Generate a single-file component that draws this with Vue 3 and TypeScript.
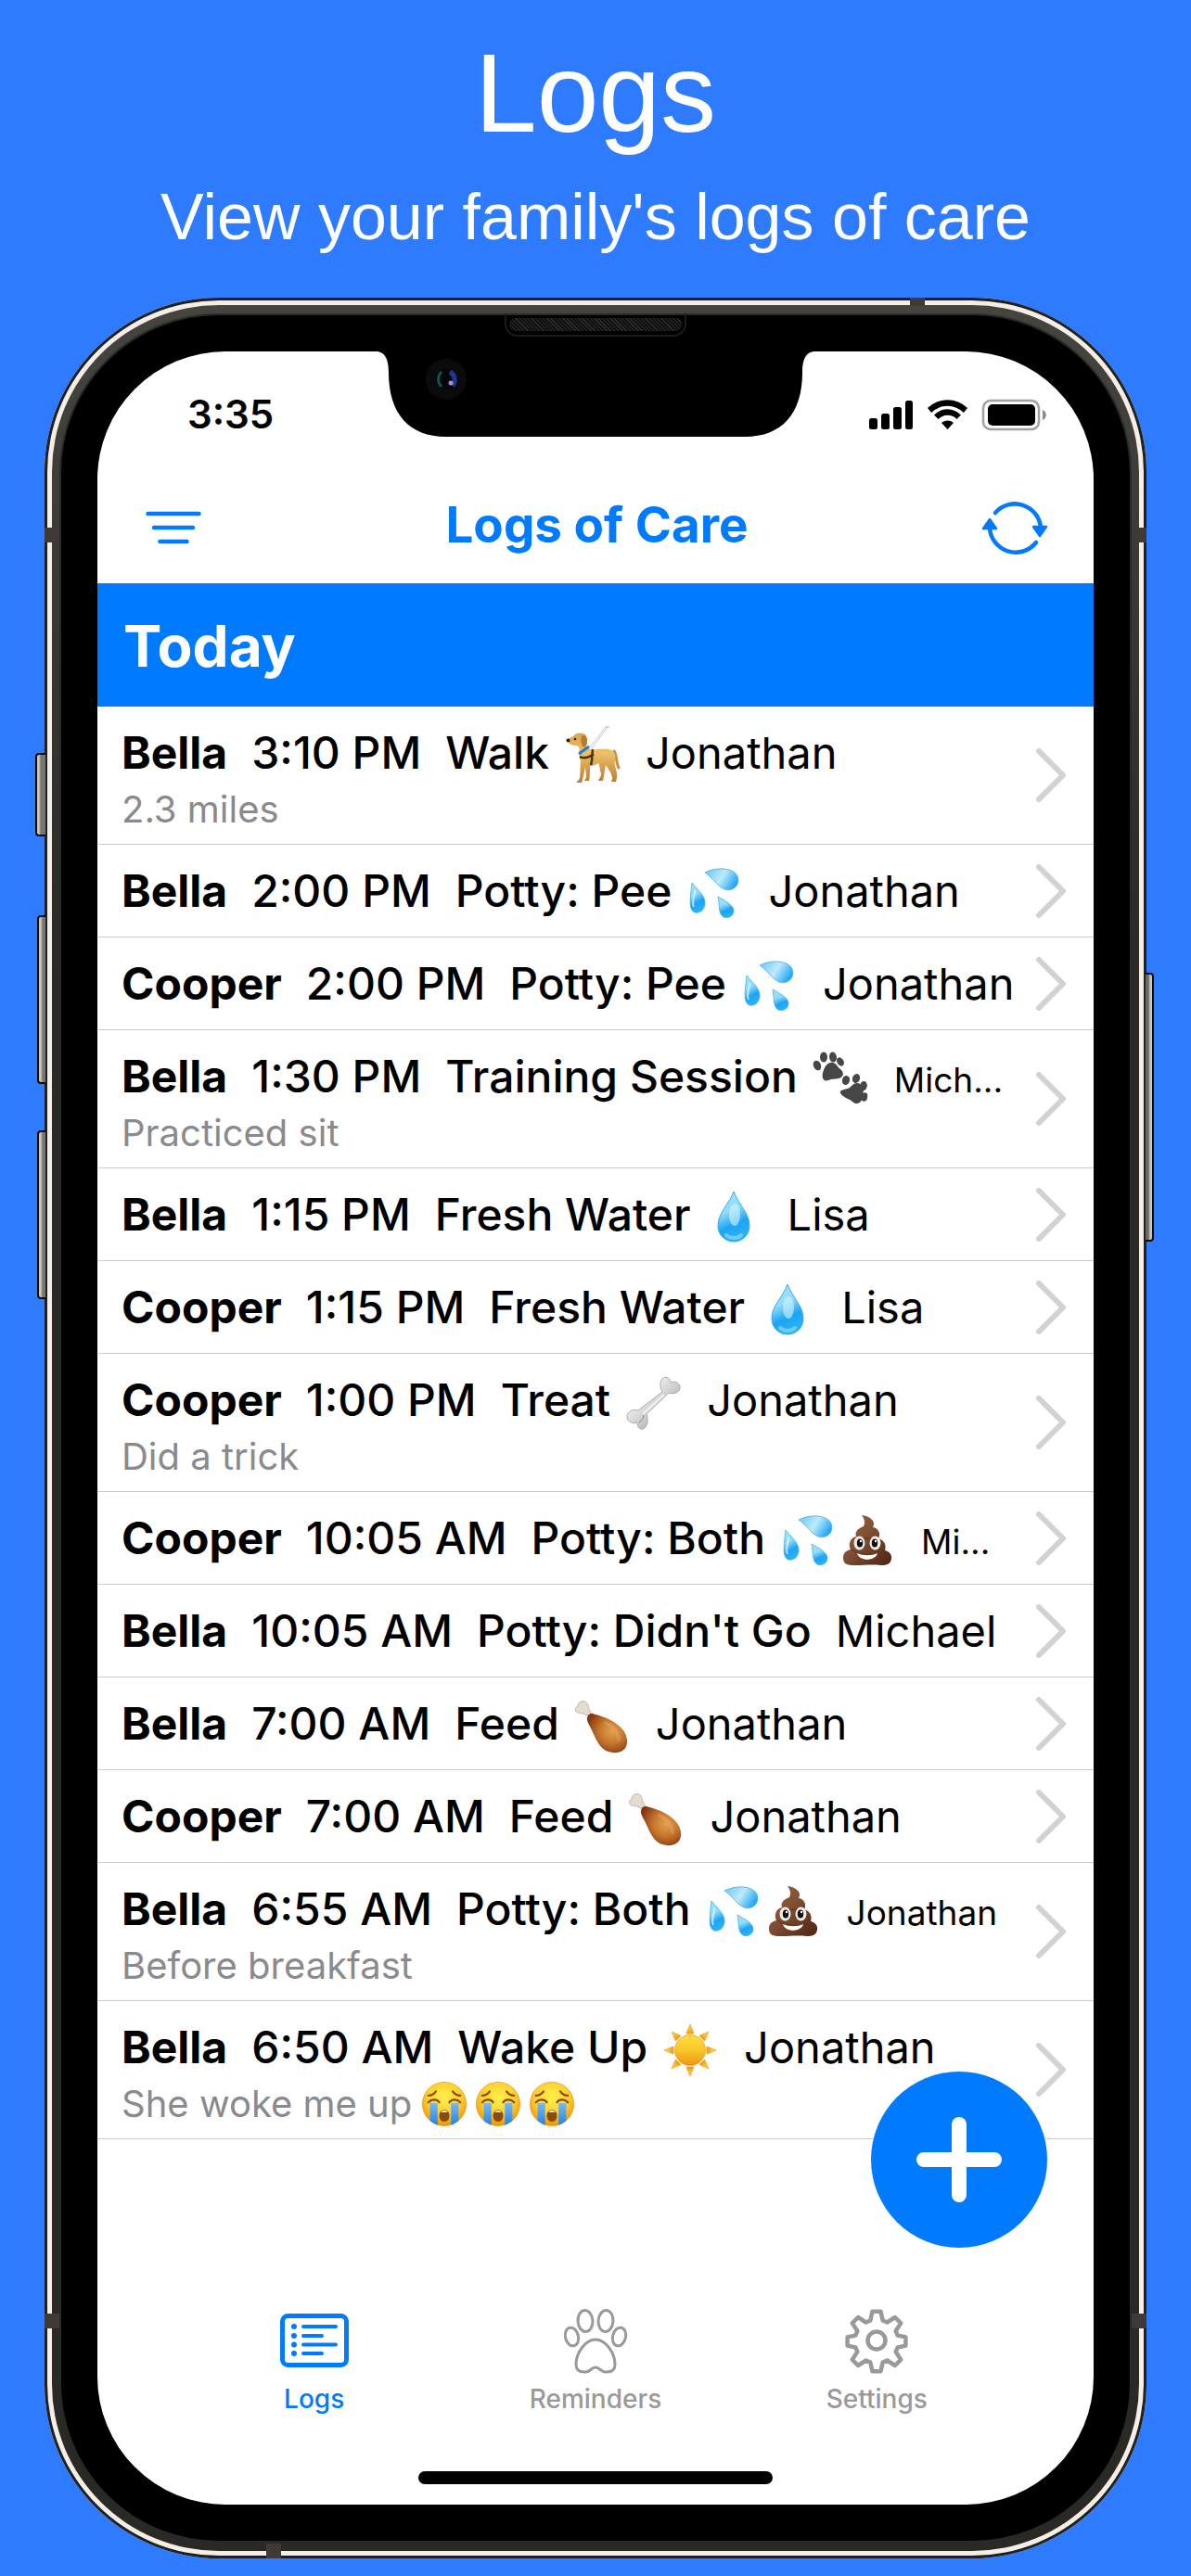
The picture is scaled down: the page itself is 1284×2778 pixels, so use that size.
<script setup lang="ts">
type Emoji = 'dog' | 'drops' | 'paws' | 'droplet' | 'bone' | 'poop' | 'leg' | 'sun' | 'cry'

interface LogEntry {
  id: number
  pet: string
  time: string
  action: string
  emojis: Emoji[]
  person: string
  small?: boolean
  note?: string
  noteEmojis?: Emoji[]
}

const logs: LogEntry[] = [
  { id: 1, pet: 'Bella', time: '3:10 PM', action: 'Walk', emojis: ['dog'], person: 'Jonathan', note: '2.3 miles' },
  { id: 2, pet: 'Bella', time: '2:00 PM', action: 'Potty: Pee', emojis: ['drops'], person: 'Jonathan' },
  { id: 3, pet: 'Cooper', time: '2:00 PM', action: 'Potty: Pee', emojis: ['drops'], person: 'Jonathan' },
  { id: 4, pet: 'Bella', time: '1:30 PM', action: 'Training Session', emojis: ['paws'], person: 'Mich...', small: true, note: 'Practiced sit' },
  { id: 5, pet: 'Bella', time: '1:15 PM', action: 'Fresh Water', emojis: ['droplet'], person: 'Lisa' },
  { id: 6, pet: 'Cooper', time: '1:15 PM', action: 'Fresh Water', emojis: ['droplet'], person: 'Lisa' },
  { id: 7, pet: 'Cooper', time: '1:00 PM', action: 'Treat', emojis: ['bone'], person: 'Jonathan', note: 'Did a trick' },
  { id: 8, pet: 'Cooper', time: '10:05 AM', action: 'Potty: Both', emojis: ['drops', 'poop'], person: 'Mi...', small: true },
  { id: 9, pet: 'Bella', time: '10:05 AM', action: "Potty: Didn't Go", emojis: [], person: 'Michael' },
  { id: 10, pet: 'Bella', time: '7:00 AM', action: 'Feed', emojis: ['leg'], person: 'Jonathan' },
  { id: 11, pet: 'Cooper', time: '7:00 AM', action: 'Feed', emojis: ['leg'], person: 'Jonathan' },
  { id: 12, pet: 'Bella', time: '6:55 AM', action: 'Potty: Both', emojis: ['drops', 'poop'], person: 'Jonathan', small: true, note: 'Before breakfast' },
  { id: 13, pet: 'Bella', time: '6:50 AM', action: 'Wake Up', emojis: ['sun'], person: 'Jonathan', note: 'She woke me up', noteEmojis: ['cry', 'cry', 'cry'] },
]

const rays = [0, 45, 90, 135, 180, 225, 270, 315]
</script>

<template>
  <div class="page">
    <svg class="sprite" aria-hidden="true">
      <defs>
        <linearGradient id="gWater" x1="0" y1="0" x2="0.3" y2="1">
          <stop offset="0" stop-color="#a9e2fb" /><stop offset="0.45" stop-color="#8fdcfb" /><stop offset="0.75" stop-color="#1ca4f4" /><stop offset="1" stop-color="#2bb0f5" />
        </linearGradient>
        <linearGradient id="gWaterSide" x1="0" y1="0.2" x2="1" y2="0.6">
          <stop offset="0" stop-color="#6fc9f5" /><stop offset="0.5" stop-color="#bdebfd" /><stop offset="1" stop-color="#1ca2f3" />
        </linearGradient>
        <linearGradient id="gPoop" x1="0" y1="0" x2="1" y2="1">
          <stop offset="0" stop-color="#9a6b4c" /><stop offset="0.5" stop-color="#7b4a2f" /><stop offset="1" stop-color="#4e2412" />
        </linearGradient>
        <radialGradient id="gLeg" cx="0.62" cy="0.45" r="0.65">
          <stop offset="0" stop-color="#e2a050" /><stop offset="0.5" stop-color="#c4742c" /><stop offset="1" stop-color="#84340f" />
        </radialGradient>
        <linearGradient id="gBone" x1="0" y1="0" x2="1" y2="1">
          <stop offset="0.3" stop-color="#f0f0f0" /><stop offset="0.6" stop-color="#c6c6c6" /><stop offset="1" stop-color="#808080" />
        </linearGradient>
        <linearGradient id="gSun" x1="0" y1="0" x2="0" y2="1">
          <stop offset="0" stop-color="#fcdf3c" /><stop offset="0.5" stop-color="#f8c62c" /><stop offset="1" stop-color="#ee9413" />
        </linearGradient>
        <linearGradient id="gDog" x1="0" y1="0" x2="0" y2="1">
          <stop offset="0" stop-color="#dca448" /><stop offset="0.4" stop-color="#ecc069" /><stop offset="1" stop-color="#b87a2a" />
        </linearGradient>
        <radialGradient id="gFace" cx="0.5" cy="0.35" r="0.65">
          <stop offset="0" stop-color="#fff04e" /><stop offset="0.6" stop-color="#fdcf2c" /><stop offset="1" stop-color="#ef9009" />
        </radialGradient>
        <linearGradient id="gTear" x1="0" y1="0" x2="0" y2="1">
          <stop offset="0" stop-color="#77b9f3" /><stop offset="1" stop-color="#2383e6" />
        </linearGradient>
      </defs>

      <symbol id="dog" viewBox="0 0 64 64">
        <path d="M49 1 32 24M46 2 30 23" fill="none" stroke="#c9c9c9" stroke-width="1" />
        <path d="M46 1 51 1" stroke="#c9c9c9" stroke-width="1.5" />
        <path d="M56 27c3 4 2 12 5 18" fill="none" stroke="#c98f3b" stroke-width="3" stroke-linecap="round" />
        <path d="M6 16c0-3 4-4 6-5 2-4 12-5 14 0 2 4-2 8 1 12 4 4 8 2 14 2 8-1 15 0 16 6 1 5-1 8 0 12 2 6 3 11 1 17h-5c0-2 2-2 1-5-1-5-4-8-7-13-1 6-2 12-3 17h-5c1-3 3-4 3-8-2-5-1-8-3-11-3 2-6 3-9 3 0 5 0 13-1 16h-5c1-2 2-2 2-5l-1-10c-1 6-3 14-4 18h-6c1-3 3-3 4-6 1-6 0-12 1-18-3-6 0-11-2-15-1-2-3-2-5-2-3-1-6-1-7-5z" fill="url(#gDog)" />
        <path d="M21 11c3-3 7 1 6 6 0 4-3 7-5 5-2-3-2-7-1-11z" fill="#b87a2d" />
        <circle cx="14" cy="14" r="1.3" fill="#2b1b08" /><circle cx="6.5" cy="15.5" r="2" fill="#2b1b08" />
        <path d="m18 30 11-8" stroke="#2a7bd0" stroke-width="3" />
        <path d="M19 33c5 3 11 0 15-3M33 25c-1 7 0 11-2 17" fill="none" stroke="#4b3310" stroke-width="2.5" />
      </symbol>

      <symbol id="drops" viewBox="0 0 64 64">
        <path d="M22 9c10-5 24-6 32 0 6 5 5 15-3 18-12 4-17-10-29-18z" fill="url(#gWaterSide)" stroke="#3fb0ee" stroke-width="0.8" />
        <path d="M8 20c6 8 15 14 14 23-1 7-6 10-11 9C3 49 7 32 8 20z" fill="url(#gWater)" stroke="#3fb0ee" stroke-width="0.8" />
        <path d="M36 35c7 4 17 9 17 15 0 6-6 9-11 7-6-4-4-13-6-22z" fill="url(#gWater)" stroke="#3fb0ee" stroke-width="0.8" />
        <path d="M11 28c1 5-4 11-1 18" fill="none" stroke="#e8fbff" stroke-width="2" opacity="0.7" />
      </symbol>

      <symbol id="paws" viewBox="0 0 64 64">
        <g fill="#464646">
          <path d="M14 22c2-5 5-9 10-8 4 1 4 4 8 7 5 4 3 9-2 10-4 1-7 0-11 2-6 2-8-4-5-11z" />
          <ellipse cx="7" cy="17" rx="4" ry="5.5" transform="rotate(-24 7 17)" />
          <ellipse cx="14" cy="8" rx="4" ry="5.5" />
          <ellipse cx="24" cy="8" rx="4" ry="5.5" transform="rotate(-8 24 8)" />
          <ellipse cx="32" cy="13" rx="3.5" ry="5" transform="rotate(-30 32 13)" />
          <path d="M33 44c4-2 8-1 11-5 4-4 9-4 12 1 2 4 0 6 0 11-1 7-7 9-11 5-3-3-7-3-10-6-3-2-4-5-2-6z" />
          <ellipse cx="38" cy="33" rx="4" ry="5" transform="rotate(15 38 33)" />
          <ellipse cx="49" cy="31" rx="4" ry="5" transform="rotate(22 49 31)" />
          <ellipse cx="57" cy="39" rx="3.8" ry="5" transform="rotate(8 57 39)" />
          <ellipse cx="58" cy="51" rx="3.2" ry="4.8" transform="rotate(10 58 51)" />
        </g>
      </symbol>

      <symbol id="droplet" viewBox="0 0 64 64">
        <path d="M32 4c5 14 17 23 17 37 0 10-8 17-17 17s-17-7-17-17C15 27 27 18 32 4z" fill="url(#gWater)" stroke="#35aaf0" stroke-width="1" />
        <ellipse cx="33" cy="29" rx="6" ry="12" fill="#d8f5ff" opacity="0.6" />
        <path d="M24 51c4 4 12 4 16 0" stroke="#7bd4fb" stroke-width="4" fill="none" stroke-linecap="round" opacity="0.8" />
      </symbol>

      <symbol id="bone" viewBox="0 0 64 64">
        <path d="M42 20c-3-5-3-12 1-15 4-2 8 1 8 5 4-2 10 0 10 5 0 6-7 8-12 6L25 44c2 5 2 14-4 16-4 1-6-3-6-7-5 2-11-1-11-6 0-6 7-9 12-7z" fill="url(#gBone)" stroke="#9c9c9c" stroke-width="0.8" />
        <path d="M44 23 21 44" stroke="#fff" stroke-width="3" opacity="0.6" />
        <path d="M17 53c3-2 5-5 5-8" stroke="#808080" stroke-width="1" fill="none" />
      </symbol>

      <symbol id="poop" viewBox="0 0 64 64">
        <path d="M26 4c9 1 16 7 12 13 6 1 9 7 6 12 6 2 9 7 7 13 5 1 8 5 7 9-1 6-5 7-11 7-10-1-18 0-29 0-7 0-12-1-12-8 0-5 3-8 8-9-3-6 0-13 6-14-2-6 3-9 8-11 2-4 1-8-2-12z" fill="url(#gPoop)" />
        <path d="M15 41c9 7 29 7 37 1M21 27c8 3 17 3 23 0" stroke="#5c3019" stroke-width="1.5" fill="none" opacity="0.6" />
        <ellipse cx="23.5" cy="34" rx="6" ry="7.5" fill="#f3eeea" /><ellipse cx="40.5" cy="34" rx="6" ry="7.5" fill="#f3eeea" />
        <ellipse cx="24" cy="34" rx="3.2" ry="4.5" fill="#111" /><ellipse cx="40" cy="34" rx="3.2" ry="4.5" fill="#111" />
        <circle cx="25" cy="32" r="1.2" fill="#fff" /><circle cx="41" cy="32" r="1.2" fill="#fff" />
        <path d="M21 45c7 3 15 3 22 0-2 9-20 9-22 0z" fill="#fff" />
      </symbol>

      <symbol id="leg" viewBox="0 0 64 64">
        <path d="M16 20 9 17c-5 2-8-5-3-7 0-6 9-8 11-1 1 4 2 8 6 10z" fill="#e4dcd0" stroke="#b5a896" stroke-width="0.8" />
        <path d="M17 20c2-3 5-2 8-1 14 3 36 14 34 31-1 9-11 12-20 9-12-4-15-19-21-29-2-4-3-7-1-10z" fill="url(#gLeg)" />
        <path d="M36 28c8 4 14 11 14 18" fill="none" stroke="#edb869" stroke-width="4" stroke-linecap="round" opacity="0.3" />
      </symbol>

      <symbol id="sun" viewBox="0 0 64 64">
        <path v-for="ray in rays" :key="ray" d="M28 14 32 4l4 10z" :transform="`rotate(${ray} 32 32)`" fill="url(#gSun)" stroke="#eda326" stroke-width="0.8" />
        <circle cx="32" cy="32" r="16.5" fill="url(#gSun)" stroke="#ef9f1b" stroke-width="0.8" />
      </symbol>

      <symbol id="cry" viewBox="0 0 64 64">
        <circle cx="32" cy="32" r="26" fill="url(#gFace)" stroke="#ea9410" stroke-width="0.8" />
        <path d="M13 22c4 0 7-2 9-5M51 22c-4 0-7-2-9-5M13 30c4-4 10-4 13 0M38 30c3-4 9-4 13 0" fill="none" stroke="#8a4a0d" stroke-width="2.5" stroke-linecap="round" />
        <path d="M15 31h9v26c-3-1-6-3-9-5zM40 31h9v21c-3 2-6 4-9 5z" fill="url(#gTear)" />
        <rect x="26" y="39" width="12" height="14" rx="6" fill="#8a4c0c" /><path d="M28 42c2-3 6-3 8 0z" fill="#fff" />
      </symbol>

      <symbol id="chevron" viewBox="0 0 32 58">
        <path d="M3 3 29 29 3 55" fill="none" stroke="#d1d1d6" stroke-width="6" stroke-linecap="round" stroke-linejoin="round" />
      </symbol>
    </svg>

    <header class="promo">
      <h1>Logs</h1>
      <p>View your family's logs of care</p>
    </header>

    <div class="phone">
      <i class="key mute"></i><i class="key up"></i><i class="key down"></i><i class="key power"></i>
      <i class="antenna top"></i><i class="antenna bottom"></i>
      <i class="antenna left-a"></i><i class="antenna left-b"></i>
      <i class="antenna right-a"></i><i class="antenna right-b"></i>
      <div class="band">
        <div class="bezel">
          <i class="speaker"></i>
          <main class="screen">
            <svg class="notch" viewBox="0 0 474 93" aria-hidden="true">
              <path d="M0 0C11 0 14 10 14 23 14 67 36 92 76 92H398c40 0 62-25 62-69C460 10 463 0 474 0z" />
              <circle cx="76" cy="30" r="22" fill="#0b0b0c" />
              <circle cx="76" cy="30" r="11" fill="#04060c" />
              <path d="M71 22a11 11 0 0 0 0 16" fill="none" stroke="#17514f" stroke-width="3" />
              <path d="M80 22a10 10 0 0 1 3 15" fill="none" stroke="#1f3790" stroke-width="5" />
              <circle cx="81" cy="34" r="2.5" fill="#b48bd0" />
            </svg>

            <div class="status">
              <span>3:35</span>
              <svg width="192" height="36" viewBox="0 0 192 36" aria-hidden="true">
                <rect x="1" y="22" width="9" height="12" rx="2.5" /><rect x="14" y="17" width="9" height="17" rx="2.5" />
                <rect x="27" y="10" width="9" height="24" rx="2.5" /><rect x="40" y="3" width="8" height="31" rx="2.5" />
                <path d="M64 11a31 31 0 0 1 43 0l-4 5a25 25 0 0 0-35 0zM71 18.500a20 20 0 0 1 29 0l-4.500 4.500a14 14 0 0 0-20 0zM79 27a10 10 0 0 1 13 0l-6.500 7z" />
                <rect x="124" y="3" width="60" height="31" rx="8" fill="none" stroke="#a0a0a0" stroke-width="2.5" />
                <rect x="129" y="7" width="51" height="23" rx="5" />
                <path d="M188 13c5 2 5 9 0 11z" fill="#8a8a8a" />
              </svg>
            </div>

            <nav class="navbar" aria-label="Page actions">
              <button type="button" aria-label="Filter">
                <svg width="60" height="36" viewBox="0 0 60 36"><path d="M2.500 3h55M9 18h42M15.500 33h29" fill="none" stroke="currentColor" stroke-width="4.5" stroke-linecap="round" /></svg>
              </button>
              <h2>Logs of Care</h2>
              <button type="button" aria-label="Refresh">
                <svg width="72" height="62" viewBox="0 0 72 62">
                  <path d="M15 15A28 28 0 0 1 64 31M59 47A28 28 0 0 1 9 31" fill="none" stroke="currentColor" stroke-width="4.5" stroke-linecap="round" />
                  <path d="m9 22 7 10H2zM63 40l-7-10h14z" fill="currentColor" stroke="currentColor" stroke-width="2.5" stroke-linejoin="round" />
                </svg>
              </button>
            </nav>

            <h3 class="day">Today</h3>

            <ul class="logs">
              <li v-for="log in logs" :key="log.id">
                <a href="#">
                  <div class="entry">
                    <div class="line">
                      <strong>{{ log.pet }}</strong>
                      <time>{{ log.time }}</time>
                      <span class="action">
                        <span class="label">{{ log.action }}</span>
                        <svg v-for="e in log.emojis" :key="e" class="emoji" viewBox="0 -3 64 64"><use :href="`#${e}`" width="64" height="64" /></svg>
                      </span>
                      <span class="person" :class="{ small: log.small }">{{ log.person }}</span>
                    </div>
                    <div v-if="log.note" class="note">
                      <span>{{ log.note }}</span>
                      <svg v-for="(e, i) in log.noteEmojis" :key="i" viewBox="0 0 64 64"><use :href="`#${e}`" width="64" height="64" /></svg>
                    </div>
                  </div>
                  <svg class="chevron" viewBox="0 0 32 58"><use href="#chevron" width="32" height="58" /></svg>
                </a>
              </li>
            </ul>

            <nav class="tabs" aria-label="Sections">
              <a href="#" class="active" aria-current="page">
                <svg viewBox="0 0 76 76">
                  <rect x="3.5" y="11.5" width="69" height="53" rx="6" fill="none" stroke="currentColor" stroke-width="5" />
                  <path d="M26 23h35M26 33h20M26 42.500h35M26 52h20" fill="none" stroke="currentColor" stroke-width="4" stroke-linecap="round" />
                  <g fill="currentColor"><circle cx="16" cy="23" r="3" /><circle cx="16" cy="33" r="3" /><circle cx="16" cy="42.5" r="3" /><circle cx="16" cy="52" r="3" /></g>
                </svg>
                Logs
              </a>
              <a href="#">
                <svg viewBox="0 0 76 76" fill="none" stroke="currentColor" stroke-width="3">
                  <ellipse cx="27" cy="17" rx="8" ry="11.5" transform="rotate(-4 27 17)" /><ellipse cx="49" cy="17" rx="8" ry="11.5" transform="rotate(4 49 17)" />
                  <ellipse cx="12.5" cy="34" rx="7" ry="10" transform="rotate(-14 12.5 34)" /><ellipse cx="63.5" cy="34" rx="7" ry="10" transform="rotate(14 63.5 34)" />
                  <path d="M38 37c10 0 21 13 21 27 0 5-3 8-9 8-6 1-7-5-12-5s-6 6-12 5c-6 0-9-3-9-8 0-14 11-27 21-27z" />
                </svg>
                Reminders
              </a>
              <a href="#">
                <svg viewBox="0 0 76 76" fill="none" stroke="currentColor" stroke-width="4.5" stroke-linejoin="round">
                  <path d="M33.500 6.800h9l2.200 9.700 4.700 2 8.500-5.500 6.300 6.300-5.500 8.500 2 4.700 8.700 1.900v9.200l-8.700 1.900-2 4.700 5.500 8.500-6.300 6.300-8.500-5.500-4.700 2-2.200 9.700h-9l-2.200-9.700-4.700-2-8.500 5.500-6.300-6.300 5.500-8.500-2-4.700-8.700-1.900v-9.200l8.700-1.900 2-4.700-5.500-8.500 6.300-6.300 8.500 5.500 4.700-2z" />
                  <circle cx="38" cy="38" r="9.5" />
                </svg>
                Settings
              </a>
            </nav>
            <div class="home"></div>

            <button type="button" class="fab" aria-label="Add log">
              <svg viewBox="0 0 92 92"><path d="M46 8v76M8 46h76" stroke="#fff" stroke-width="16" stroke-linecap="round" /></svg>
            </button>
          </main>
        </div>
      </div>
    </div>
  </div>
</template>

<style>
body {
  margin: 0;
  background: #2e7bff;
}
</style>

<style scoped>
* {
  box-sizing: border-box;
}

.page {
  display: flex;
  flex-direction: column;
  min-height: 100vh;
  background: #2e7bff;
  font-family: Inter, "Liberation Sans", sans-serif;
}

.sprite {
  position: absolute;
  width: 0;
  height: 0;
}

.promo {
  padding: 30px 0 44px;
  color: #fff;
  font-family: "Liberation Sans", Arial, sans-serif;
  text-align: center;
}

.promo h1 {
  margin: 0;
  font-size: 120px;
  font-weight: 400;
  line-height: 140px;
}

.promo p {
  margin: 21px 0 0;
  font-size: 70px;
  line-height: 86px;
}

.phone {
  position: relative;
  display: flex;
  flex: 1;
  margin: 0 48px 19px;
  padding: 8px;
  border-radius: 188px;
  background: #f5eee6;
  box-shadow: inset 0 0 0 3px #1f2021;
}

.band {
  display: flex;
  flex: 1;
  min-width: 0;
  padding: 9px 8px;
  border-radius: 180px;
  background: linear-gradient(#45443f, #2a2925 30%);
}

.bezel {
  position: relative;
  display: flex;
  flex: 1;
  min-width: 0;
  padding: 39px;
  border: 2px solid #29292a;
  border-radius: 172px;
  background: #000;
}

.key {
  position: absolute;
  left: -10px;
  width: 11px;
  border: 2px solid #0c0c0c;
  border-right: 0;
  border-radius: 4px 0 0 4px;
  background: linear-gradient(90deg, #cbc5bb 2px, #77766f 4px);
}

.mute { top: 491px; height: 90px; }
.up { top: 666px; left: -8px; width: 9px; height: 182px; }
.down { top: 898px; left: -8px; width: 9px; height: 182px; }
.power {
  top: 728px;
  right: -8px;
  left: auto;
  width: 9px;
  height: 290px;
  border: 2px solid #0c0c0c;
  border-left: 0;
  border-radius: 0 4px 4px 0;
  background: linear-gradient(270deg, #cbc5bb 2px, #6b6a60 4px);
}

.antenna {
  position: absolute;
  width: 16px;
  height: 16px;
  background: #3f3a38;
}

.top { top: 0; right: 239px; height: 9px; }
.bottom { bottom: 0; left: 239px; }
.left-a { top: 248px; left: 0; }
.left-b { bottom: 248px; left: 0; }
.right-a { top: 248px; right: 0; }
.right-b { bottom: 248px; right: 0; }

.speaker {
  position: absolute;
  top: -2px;
  left: 50%;
  width: 196px;
  height: 25px;
  margin-left: -98px;
  border: 2px solid #1c1c1c;
  border-top: 0;
  border-radius: 0 0 14px 14px;
}

.speaker::after {
  position: absolute;
  top: 5px;
  right: 3px;
  left: 3px;
  height: 14px;
  border-radius: 7px;
  background: repeating-linear-gradient(45deg, #111 0 2px, #2d2d2d 2px 3px);
  content: "";
}

.screen {
  position: relative;
  display: flex;
  flex: 1;
  flex-direction: column;
  min-width: 0;
  overflow: hidden;
  border-radius: 138px;
  background: #fff;
  color: #000;
}

.notch {
  position: absolute;
  top: 0;
  left: 50%;
  width: 474px;
  height: 93px;
  margin-left: -237px;
}

.status {
  display: flex;
  align-items: center;
  justify-content: space-between;
  padding: 42px 51px 0 97px;
  font-size: 42px;
  font-weight: 600;
  line-height: 52px;
}

.navbar {
  display: grid;
  grid-template-columns: 1fr auto 1fr;
  align-items: center;
  padding: 36px 49px 0 52px;
  height: 156px;
  color: #007aff;
}

.navbar h2 {
  margin: 0;
  padding-bottom: 6px;
  font-size: 53px;
  font-weight: 700;
  line-height: 64px;
}

.navbar button {
  display: flex;
  margin: 0;
  padding: 0;
  border: 0;
  background: none;
  color: inherit;
}

.navbar button:last-child {
  justify-self: end;
}

.day {
  margin: 0;
  padding: 30px 28px 27px;
  background: #007aff;
  color: #fff;
  font-size: 62px;
  font-weight: 700;
  line-height: 76px;
}

.logs {
  flex: 1;
  margin: 0;
  padding: 0;
  list-style: none;
}

.logs li {
  border-bottom: 1px solid #cbcbcd;
}

.logs a {
  display: flex;
  padding: 0 30px 0 26px;
  min-height: 99px;
  color: inherit;
  text-decoration: none;
}

.entry {
  flex: 1;
  min-width: 0;
  padding: 18px 0 14px;
}

.line {
  display: flex;
  gap: 26px;
  font-size: 48px;
  font-weight: 500;
  line-height: 64px;
  white-space: nowrap;
}

.line strong {
  font-weight: 700;
}

.action {
  display: flex;
}

.emoji {
  width: 64px;
  height: 64px;
}

.label + .emoji {
  margin-left: 14px;
}

.person {
  font-size: 47px;
  font-weight: 400;
}

.person.small {
  height: 64px;
  padding-top: 4px;
  font-size: 37px;
}

.note {
  display: flex;
  margin-top: 6px;
  color: #8a8a8e;
  font-size: 40px;
  line-height: 46px;
}

.note svg {
  width: 58px;
  height: 58px;
  margin: -6px 0;
}

.note span + svg {
  margin-left: 6px;
}

.chevron {
  flex: none;
  align-self: center;
  width: 32px;
  height: 58px;
}

.tabs {
  display: grid;
  grid-template-columns: repeat(3, 1fr);
  padding: 0 82px;
}

.tabs a {
  display: flex;
  flex-direction: column;
  align-items: center;
  gap: 8px;
  color: #999;
  font-size: 28px;
  font-weight: 500;
  line-height: 34px;
  text-decoration: none;
}

.tabs a.active {
  color: #007aff;
}

.tabs svg {
  width: 76px;
  height: 76px;
}

.home {
  align-self: center;
  width: 382px;
  height: 14px;
  margin: 61px 0 22px;
  border-radius: 7px;
  background: #000;
}

.fab {
  position: absolute;
  right: 50px;
  bottom: 277px;
  display: flex;
  align-items: center;
  justify-content: center;
  width: 190px;
  height: 190px;
  padding: 0;
  border: 0;
  border-radius: 50%;
  background: #007aff;
}

.fab svg {
  width: 92px;
  height: 92px;
}
</style>
